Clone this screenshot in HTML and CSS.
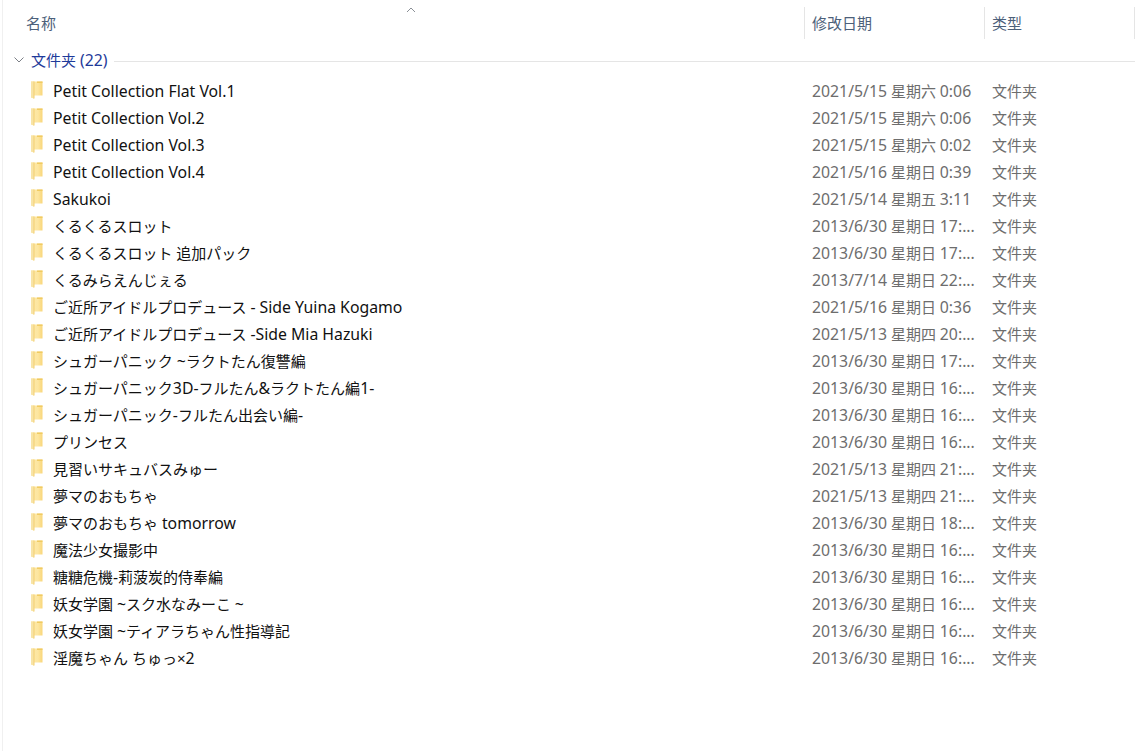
FILE: index.html
```html
<!DOCTYPE html>
<html lang="zh">
<head>
    <meta charset="UTF-8">
    <title>文件夹</title>
    <link rel="stylesheet" href="styles.css">
</head>
<body>
    <svg class="defs" width="0" height="0">
        <defs>
            <linearGradient id="folderFill" x1="0" y1="0" x2="1" y2="0">
                <stop offset="0" stop-color="#fce8a8"/>
                <stop offset="0.6" stop-color="#fde6a0"/>
                <stop offset="1" stop-color="#f9d679"/>
            </linearGradient>
            <symbol id="folder" viewBox="0 0 14 18">
                <path d="M1 0.5H12.5V14.5H4V17.5L1 16.5Z" fill="url(#folderFill)"/>
                <path d="M1 0.5H4V17.5L1 16.5Z" fill="#f8e4a6"/>
                <path d="M4 0.5L4 17.5" stroke="#f3cf72" stroke-width="1" fill="none"/>
                <path d="M7 0.5H12.5V2H7Z" fill="#f0cb62"/>
            </symbol>
        </defs>
    </svg>

    <div class="explorer">
        <svg class="sort-arrow" viewBox="0 0 10 6" width="10" height="6"><path d="M1 5L5 1L9 5" fill="none" stroke="#8a8f96"/></svg>
        <div class="header">
            <div class="col-name head-cell">名称</div>
            <div class="col-date head-cell">修改日期</div>
            <div class="col-type head-cell">类型</div>
        </div>

        <div class="group">
            <svg class="chevron" viewBox="0 0 10 6" width="10" height="6"><path d="M0.5 0.5L5 5L9.5 0.5" fill="none" stroke="#7c8087"/></svg>
            <span class="group-title">文件夹 <span class="latin">(22)</span></span>
            <span class="group-line"></span>
        </div>

        <div class="rows" id="rows"></div>
    </div>

    <script>
        const items = [
            ["Petit Collection Flat Vol.1", "2021/5/15 星期六 0:06"],
            ["Petit Collection Vol.2", "2021/5/15 星期六 0:06"],
            ["Petit Collection Vol.3", "2021/5/15 星期六 0:02"],
            ["Petit Collection Vol.4", "2021/5/16 星期日 0:39"],
            ["Sakukoi", "2021/5/14 星期五 3:11"],
            ["くるくるスロット", "2013/6/30 星期日 17:..."],
            ["くるくるスロット 追加パック", "2013/6/30 星期日 17:..."],
            ["くるみらえんじぇる", "2013/7/14 星期日 22:..."],
            ["ご近所アイドルプロデュース - Side Yuina Kogamo", "2021/5/16 星期日 0:36"],
            ["ご近所アイドルプロデュース -Side Mia Hazuki", "2021/5/13 星期四 20:..."],
            ["シュガーパニック ~ラクトたん復讐編", "2013/6/30 星期日 17:..."],
            ["シュガーパニック3D-フルたん&ラクトたん編1-", "2013/6/30 星期日 16:..."],
            ["シュガーパニック-フルたん出会い編-", "2013/6/30 星期日 16:..."],
            ["プリンセス", "2013/6/30 星期日 16:..."],
            ["見習いサキュバスみゅー", "2021/5/13 星期四 21:..."],
            ["夢マのおもちゃ", "2021/5/13 星期四 21:..."],
            ["夢マのおもちゃ tomorrow", "2013/6/30 星期日 18:..."],
            ["魔法少女撮影中", "2013/6/30 星期日 16:..."],
            ["糖糖危機-莉菠炭的侍奉編", "2013/6/30 星期日 16:..."],
            ["妖女学園 ~スク水なみーこ ~", "2013/6/30 星期日 16:..."],
            ["妖女学園 ~ティアラちゃん性指導記", "2013/6/30 星期日 16:..."],
            ["淫魔ちゃん ちゅっ×2", "2013/6/30 星期日 16:..."]
        ];

        // latin runs are drawn a bit bigger than the CJK ones, like the system font pairing
        function fillMixed(el, text) {
            text.split(/([\x21-\x7e]+(?: [\x21-\x7e]+)*)/).forEach(function (part) {
                if (part === "") return;
                if (/^[\x21-\x7e]/.test(part)) {
                    let run = document.createElement("span");
                    run.classList.add("latin");
                    run.textContent = part;
                    el.appendChild(run);
                } else {
                    el.appendChild(document.createTextNode(part));
                }
            });
        }

        const rows = document.getElementById("rows");
        items.forEach(function (item) {
            let row = document.createElement("div");
            row.classList.add("row");

            let name = document.createElement("div");
            name.classList.add("col-name", "file-name");
            name.innerHTML = '<svg class="folder-icon" width="14" height="18"><use href="#folder"/></svg>';
            let label = document.createElement("span");
            fillMixed(label, item[0]);
            name.appendChild(label);

            let date = document.createElement("div");
            date.classList.add("col-date", "file-meta");
            fillMixed(date, item[1]);

            let type = document.createElement("div");
            type.classList.add("col-type", "file-meta");
            type.textContent = "文件夹";

            row.append(name, date, type);
            rows.appendChild(row);
        });
    </script>
</body>
</html>
```

FILE: styles.css
```css
* {
    margin: 0;
    padding: 0;
    box-sizing: border-box;
}

body {
    background: white;
    font-family: 'Noto Sans', 'Noto Sans CJK SC', sans-serif;
    font-size: 15px;
    height: 751px;
    overflow: hidden;
}

.defs {
    position: absolute;
}

.latin {
    font-size: 15.8px;
}

.explorer {
    position: relative;
    height: 751px;
    margin-left: 2px;
    border-left: 1px solid #f0f0f0;
}

.sort-arrow {
    position: absolute;
    left: 403px;
    top: 7px;
}

.header {
    display: flex;
    height: 40px;
    padding-top: 7px;
}

.col-name {
    width: 802px;
    flex-shrink: 0;
}

.col-date {
    width: 180px;
    flex-shrink: 0;
}

.col-type {
    flex-grow: 1;
}

.head-cell {
    height: 32px;
    line-height: 32px;
    color: #4c607a;
    font-size: 15px;
    padding-left: 7px;
    border-right: 1px solid #e5e5e5;
}

.head-cell.col-name {
    padding-left: 23px;
}

.group {
    display: flex;
    align-items: center;
    height: 28px;
    margin-top: 6px;
    padding-left: 11px;
}

.chevron {
    flex-shrink: 0;
}

.group-title {
    color: #1e3a9a;
    font-size: 15px;
    margin-left: 7px;
    white-space: nowrap;
}

.group-line {
    flex-grow: 1;
    height: 1px;
    background: #e5e5e5;
    margin-left: 7px;
    position: relative;
    top: 1px;
}

.rows {
    margin-top: 3px;
}

.row {
    display: flex;
    height: 27px;
    align-items: center;
}

.file-name {
    display: flex;
    align-items: center;
    padding-left: 27px;
    color: #111;
    font-family: 'Noto Sans', 'Noto Sans CJK JP', sans-serif;
    white-space: nowrap;
}

.folder-icon {
    flex-shrink: 0;
    margin-right: 9px;
    position: relative;
    top: -1px;
}

.file-meta {
    color: #6d6d6d;
    font-size: 15px;
    padding-left: 7px;
    white-space: nowrap;
}
```
